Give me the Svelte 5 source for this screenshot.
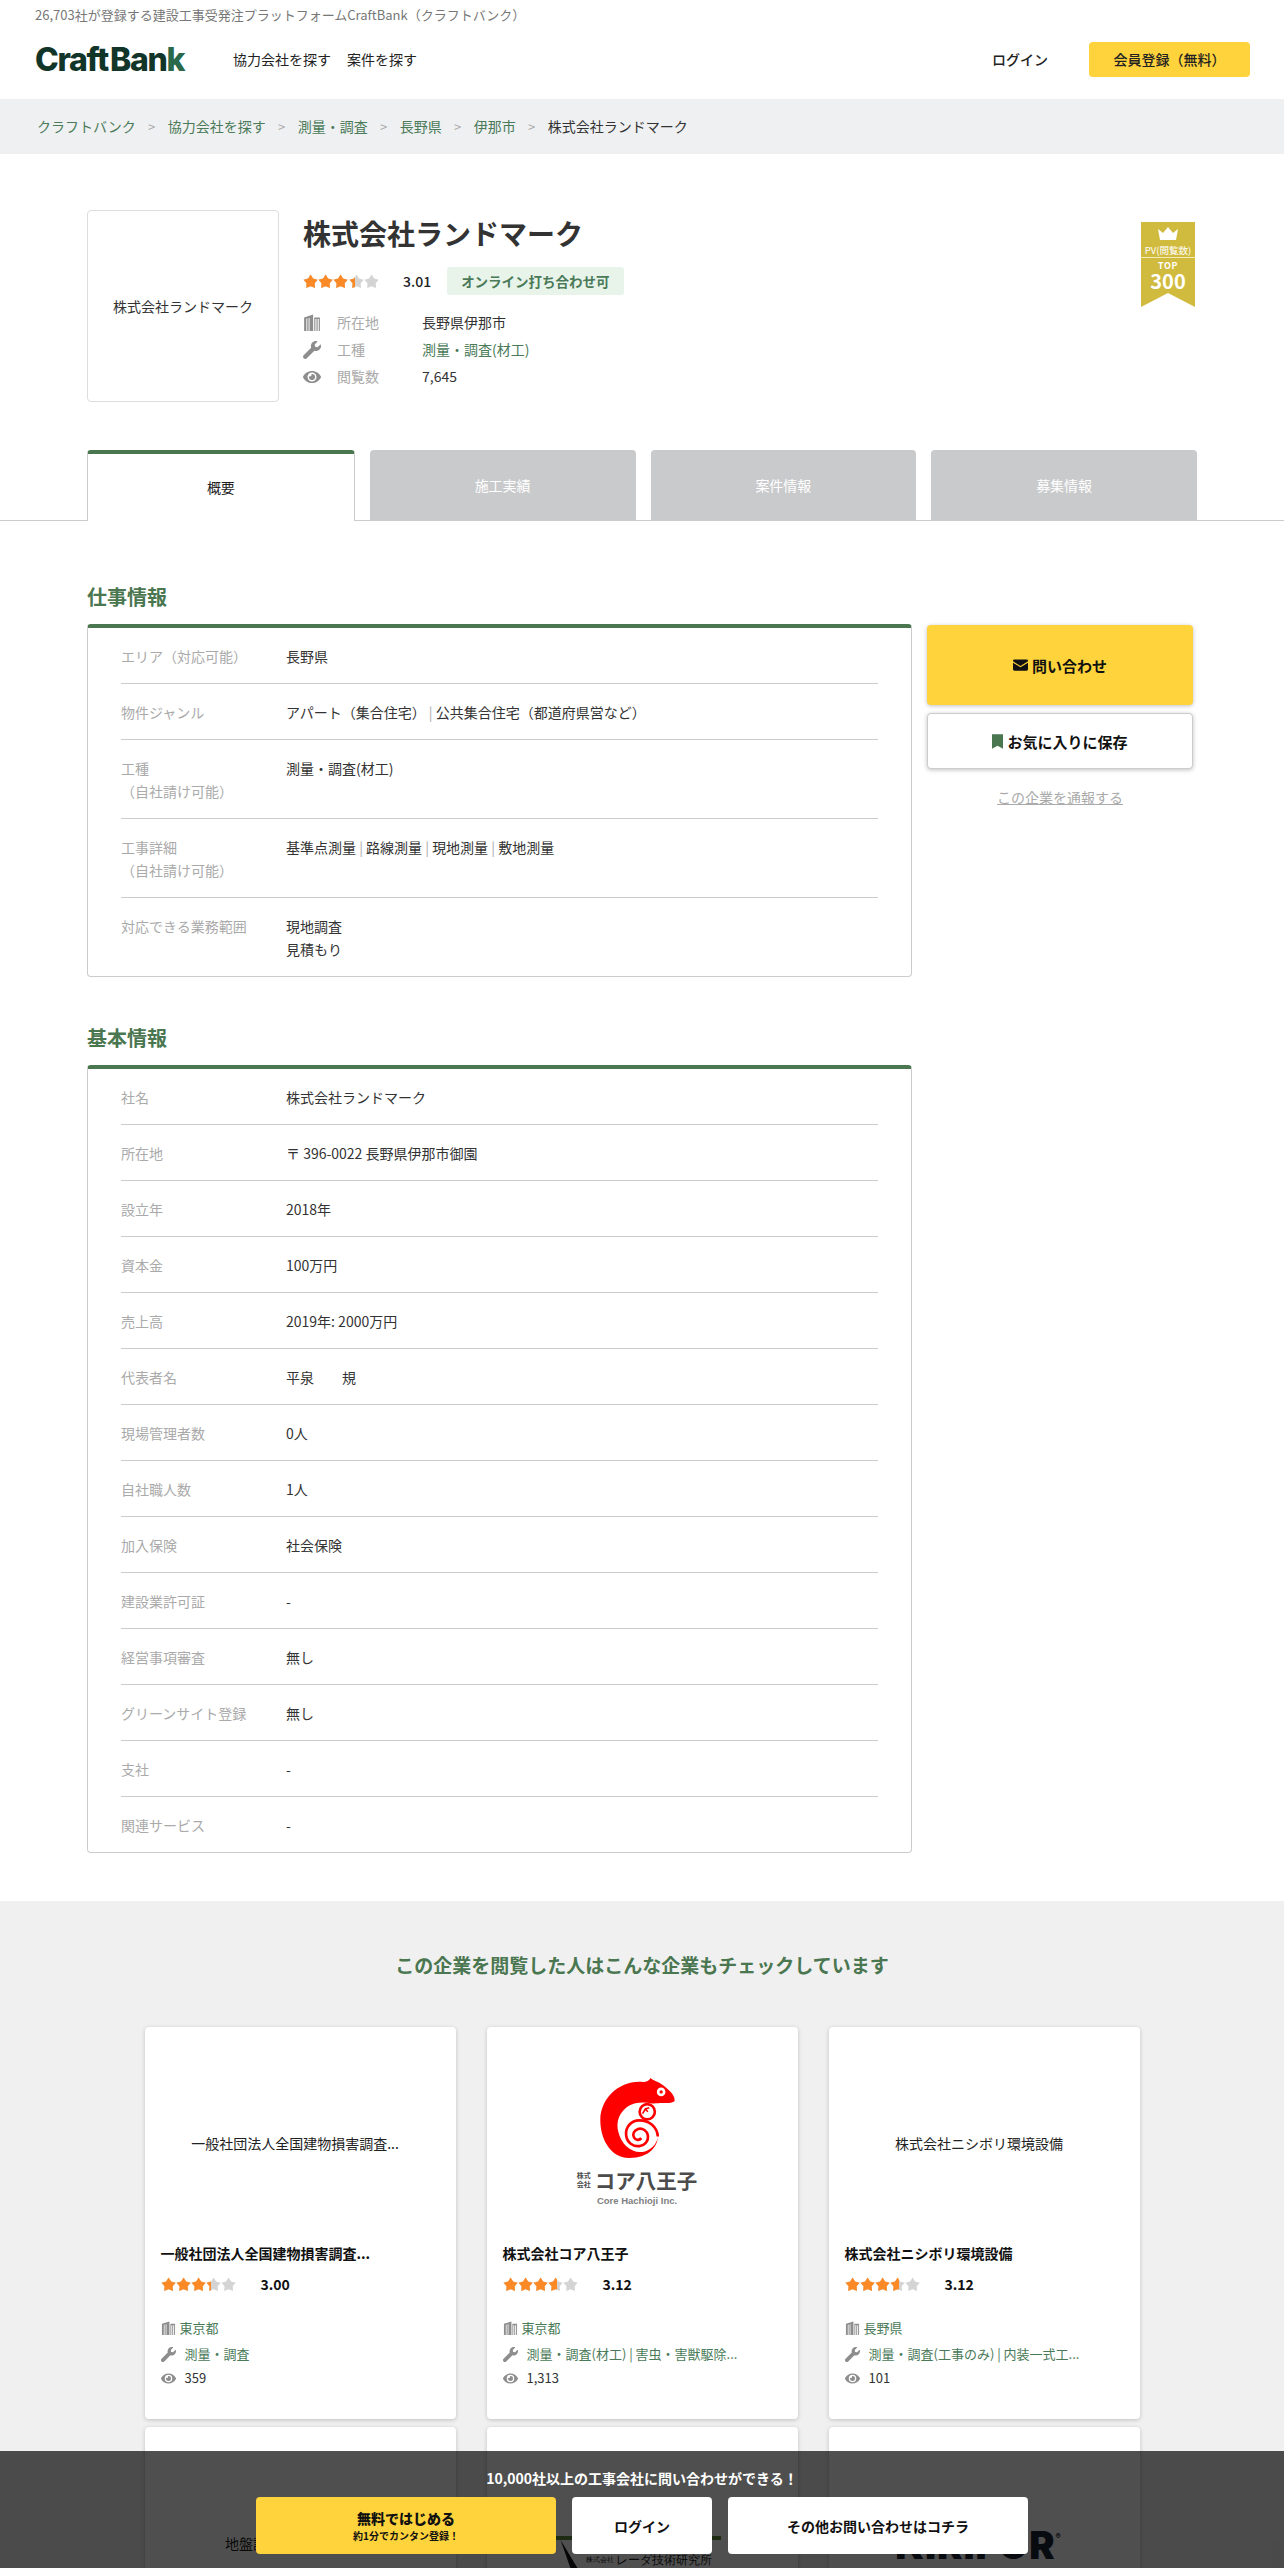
<script lang="ts">
	const jobRows = [
		{ label: 'エリア（対応可能）', lines: ['長野県'] },
		{ label: '物件ジャンル', lines: ['アパート（集合住宅） | 公共集合住宅（都道府県営など）'] },
		{ label: '工種\n（自社請け可能）', lines: ['測量・調査(材工)'] },
		{ label: '工事詳細\n（自社請け可能）', lines: ['基準点測量 | 路線測量 | 現地測量 | 敷地測量'] },
		{ label: '対応できる業務範囲', lines: ['現地調査', '見積もり'] }
	];

	const basicRows = [
		['社名', '株式会社ランドマーク'],
		['所在地', '〒 396-0022 長野県伊那市御園'],
		['設立年', '2018年'],
		['資本金', '100万円'],
		['売上高', '2019年: 2000万円'],
		['代表者名', '平泉　　規'],
		['現場管理者数', '0人'],
		['自社職人数', '1人'],
		['加入保険', '社会保険'],
		['建設業許可証', '-'],
		['経営事項審査', '無し'],
		['グリーンサイト登録', '無し'],
		['支社', '-'],
		['関連サービス', '-']
	];

	const cards = [
		{ logo: '一般社団法人全国建物損害調査...', title: '一般社団法人全国建物損害調査...', score: '3.00', fill: 67, pref: '東京都', trade: '測量・調査', views: '359' },
		{ logo: '', title: '株式会社コア八王子', score: '3.12', fill: 72, pref: '東京都', trade: '測量・調査(材工) | 害虫・害獣駆除...', views: '1,313' },
		{ logo: '株式会社ニシボリ環境設備', title: '株式会社ニシボリ環境設備', score: '3.12', fill: 72, pref: '長野県', trade: '測量・調査(工事のみ) | 内装一式工...', views: '101' }
	];

	const star = 'M8 .5L10.700 4.780 15.600 6.030 12.370 9.920 12.700 14.970 8 13.100 3.300 14.970 3.630 9.920 .4 6.030 5.300 4.780z';
</script>

{#snippet stars(fill)}
	<span class="stars">
		<span class="stars-row grey">
			{#each [0, 1, 2, 3, 4] as i}
				<svg viewBox="0 0 16 16"><path d={star} /></svg>
			{/each}
		</span>
		<span class="stars-row orange" style={`width:${fill}%`}>
			{#each [0, 1, 2, 3, 4] as i}
				<svg viewBox="0 0 16 16"><path d={star} /></svg>
			{/each}
		</span>
	</span>
{/snippet}

{#snippet buildingIcon()}
	<svg class="icon" viewBox="0 0 16 16"><path d="M1 15V3l8-2.500V15zM10 3h5v12h-1V4.500h-1V15h-1V4.500h-1V15h-1z" /><path d="M3 4v11h.8V4zM5 3.500V15h.8V3.500z" fill="#fff" /></svg>
{/snippet}

{#snippet wrenchIcon()}
	<svg class="icon" viewBox="0 0 512 512"><path d="M507.700 109.100c-2.200-9-13.500-12.100-20.100-5.500l-74.400 74.400-67.900-11.300-11.300-67.900 74.400-74.400c6.600-6.600 3.400-17.900-5.700-20.200-47.400-11.700-99.500.9-136.600 38-39.700 39.700-50.800 97.100-34.900 147.200L18.700 402.800c-25 25-25 65.500 0 90.500s65.500 25 90.500 0l213.200-213.200c50.100 15.900 107.500 4.800 147.300-34.900 37.100-37.100 49.700-89.300 38-136.100z" /></svg>
{/snippet}

{#snippet eyeIcon()}
	<svg class="icon" viewBox="0 0 576 512"><path d="M572.500 241.400C518.300 135.600 410.900 64 288 64S57.700 135.600 3.500 241.400a32.400 32.400 0 0 0 0 29.200C57.700 376.400 165.100 448 288 448s230.300-71.600 284.500-177.400a32.400 32.400 0 0 0 0-29.200zM288 400a144 144 0 1 1 144-144 143.900 143.900 0 0 1-144 144zm0-240a95.300 95.300 0 0 0-25.300 3.800 47.900 47.900 0 0 1-66.900 66.900A95.800 95.800 0 1 0 288 160z" /></svg>
{/snippet}

<div class="page">
	<header class="site-header">
		<p class="tagline">26,703社が登録する建設工事受発注プラットフォームCraftBank（クラフトバンク）</p>
		<div class="header-row">
			<div class="logo">Craft<span class="gap"></span>Ban<span class="logo-k">k</span></div>
			<nav class="main-nav">
				<span>協力会社を探す</span>
				<span>案件を探す</span>
			</nav>
			<span class="login">ログイン</span>
			<span class="register">会員登録（無料）</span>
		</div>
	</header>

	<div class="breadcrumb">
		<span class="crumb">クラフトバンク</span><span class="sep">&gt;</span>
		<span class="crumb">協力会社を探す</span><span class="sep">&gt;</span>
		<span class="crumb">測量・調査</span><span class="sep">&gt;</span>
		<span class="crumb">長野県</span><span class="sep">&gt;</span>
		<span class="crumb">伊那市</span><span class="sep">&gt;</span>
		<span>株式会社ランドマーク</span>
	</div>

	<section class="hero">
		<div class="hero-logo">株式会社ランドマーク</div>
		<div class="hero-body">
			<h1>株式会社ランドマーク</h1>
			<div class="rating-line">
				{@render stars(69)}
				<b class="score">3.01</b>
				<span class="online">オンライン打ち合わせ可</span>
			</div>
			<dl class="facts">
				<div>{@render buildingIcon()}<dt>所在地</dt><dd>長野県伊那市</dd></div>
				<div>{@render wrenchIcon()}<dt>工種</dt><dd class="green">測量・調査(材工)</dd></div>
				<div>{@render eyeIcon()}<dt>閲覧数</dt><dd>7,645</dd></div>
			</dl>
		</div>
		<div class="medal">
			<svg viewBox="0 0 54 85"><path d="M0 0h54v85L27 71 0 85z" fill="#d1bb3e" /><path d="M17 7l5 4 5-6 5 6 5-4-2 11H19z" fill="#fff" /><path d="M0 35h54v1H0z" fill="#f3ecb8" /></svg>
			<span class="medal-pv">PV(閲覧数)</span>
			<span class="medal-top">TOP</span>
			<span class="medal-num">300</span>
		</div>
	</section>

	<div class="tabs">
		<span class="tab active">概要</span>
		<span class="tab">施工実績</span>
		<span class="tab">案件情報</span>
		<span class="tab">募集情報</span>
	</div>

	<main class="content">
		<div class="left">
			<h2>仕事情報</h2>
			<div class="panel">
				{#each jobRows as row}
					<div class="row">
						<div class="row-label">{row.label}</div>
						<div class="row-value">
							{#each row.lines as line}
								<div>
									{#each line.split(' | ') as part, i}
										{#if i}<span class="bar">{' | '}</span>{/if}{part}
									{/each}
								</div>
							{/each}
						</div>
					</div>
				{/each}
			</div>

			<h2 class="second">基本情報</h2>
			<div class="panel">
				{#each basicRows as [label, value]}
					<div class="row">
						<div class="row-label">{label}</div>
						<div class="row-value">{value}</div>
					</div>
				{/each}
			</div>
		</div>

		<aside class="side">
			<button class="ask">
				<svg viewBox="0 0 16 12"><path d="M0 1.500A1.500 1.500 0 0 1 1.500 0h13A1.500 1.500 0 0 1 16 1.500v.5L8 7 0 2zM0 3.500V10.500A1.500 1.500 0 0 0 1.500 12h13a1.500 1.500 0 0 0 1.500-1.500V3.500L8 8.500z" /></svg>
				問い合わせ
			</button>
			<button class="save">
				<svg viewBox="0 0 12 16"><path d="M0 0h12v16L6 12.500 0 16z" /></svg>
				お気に入りに保存
			</button>
			<span class="report">この企業を通報する</span>
		</aside>
	</main>

	<section class="related">
		<h2>この企業を閲覧した人はこんな企業もチェックしています</h2>
		<div class="card-grid">
			{#each cards as card}
				<article class="card">
					<div class="card-logo">
						{#if card.logo}
							{card.logo}
						{:else}
							<div class="core">
								<svg viewBox="0 0 225 242">
									<path d="M152 0C160 8 175 10 190 22 205 34 225 50 225 67 225 75 205 76 190 76 175 76 165 78 157 77 135 72 105 72 85 85 60 102 45 130 55 165 65 205 100 232 135 222 160 214 172 195 174 177 174 205 150 242 87 242 35 242 0 190 0 127 0 60 60 5 130 12 140 12 148 8 152 0Z" fill="#f00" />
									<path d="M174 177C172 148 148 128 118 128 92 128 76 150 78 172 80 196 100 208 118 206 136 204 146 190 144 174 142 160 128 150 114 154 102 158 96 170 102 180 106 188 118 190 124 182" fill="none" stroke="#f00" stroke-width="8" />
									<circle cx="142" cy="102" r="23" fill="#fff" stroke="#f00" stroke-width="8" />
									<path d="M128 108l8-14 8 8M136 94l12-4" fill="none" stroke="#f00" stroke-width="5" />
									<circle cx="184" cy="42" r="13" fill="#fff" /><circle cx="184" cy="42" r="5" fill="#f00" />
								</svg>
								<div class="core-name"><span class="core-kind">株式<br />会社</span><span>コア八王子</span></div>
								<div class="core-en">Core Hachioji Inc.</div>
							</div>
						{/if}
					</div>
					<h3>{card.title}</h3>
					<div class="card-rating">
						{@render stars(card.fill)}
						<b>{card.score}</b>
					</div>
					<div class="card-fact pref">{@render buildingIcon()}<span class="green">{card.pref}</span></div>
					<div class="card-fact">{@render wrenchIcon()}<span class="green">{card.trade}</span></div>
					<div class="card-fact">{@render eyeIcon()}<span>{card.views}</span></div>
				</article>
			{/each}
			<article class="card"><div class="card-logo">地盤調査解析株式会社</div></article>
			<article class="card">
				<div class="radar">
					<div class="radar-bar"></div>
					<div class="radar-row">
						<svg viewBox="0 0 12 20"><path d="M0 0l12 20H7z" fill="#15151f" /></svg>
						<span class="radar-kind">株式会社</span>
						<span>レーダ技術研究所</span>
					</div>
				</div>
			</article>
			<article class="card"><div class="kiri">KIRIFOR<sup>®</sup></div></article>
		</div>
	</section>

	<div class="cta">
		<p>10,000社以上の工事会社に問い合わせができる！</p>
		<div class="cta-buttons">
			<button class="cta-start"><b>無料ではじめる</b><small>約1分でカンタン登録！</small></button>
			<button class="cta-login">ログイン</button>
			<button class="cta-other">その他お問い合わせはコチラ</button>
		</div>
	</div>
</div>

<style>
	:global(body) {
		margin: 0;
		background: #fff;
	}

	.page {
		position: relative;
		height: 2568px;
		overflow: hidden;
		font-family: 'Noto Sans CJK JP', 'Noto Sans', sans-serif;
		font-size: 14px;
		color: #333;
		line-height: 1.5;
	}

	p, h1, h2, h3, dl, dd {
		margin: 0;
	}

	button {
		border: 0;
		font-family: inherit;
		color: #111;
		font-weight: 700;
	}

	.icon {
		display: block;
		width: 16px;
		height: 16px;
		fill: #8d8d8d;
		flex: none;
	}

	.green {
		color: #4a7a58;
	}

	/* header */
	.site-header {
		height: 99px;
		padding: 5px 34px 0 35px;
		box-sizing: border-box;
	}

	.tagline {
		font-size: 13px;
		line-height: 20px;
		color: #777;
	}

	.header-row {
		display: flex;
		align-items: center;
		height: 35px;
		margin-top: 17px;
	}

	.logo {
		width: 198px;
		font-family: Inter, sans-serif;
		font-size: 32px;
		font-weight: 800;
		letter-spacing: -1.300px;
		color: #12352a;
		line-height: 35px;
	}

	.logo .gap {
		display: inline-block;
		width: 2px;
	}

	.logo-k {
		color: #2a6a4a;
	}

	.main-nav {
		display: flex;
		gap: 16px;
		color: #222;
	}

	.login {
		margin-left: auto;
		font-weight: 500;
		color: #222;
		margin-right: 41px;
	}

	.register {
		width: 161px;
		height: 35px;
		border-radius: 4px;
		background: #ffd33b;
		font-weight: 500;
		line-height: 35px;
		text-align: center;
		color: #222;
	}

	.breadcrumb {
		display: flex;
		align-items: center;
		height: 55px;
		padding-left: 37px;
		background: #eff0f2;
		color: #333;
	}

	.crumb {
		color: #4a7a58;
	}

	.sep {
		margin: 0 12.400px;
		color: #aaa;
		font-size: 13px;
	}

	/* hero */
	.hero {
		position: relative;
		display: flex;
		gap: 24px;
		margin: 56px 87px 0;
		height: 240px;
	}

	.hero-logo {
		display: flex;
		align-items: center;
		justify-content: center;
		width: 192px;
		height: 192px;
		box-sizing: border-box;
		border: 1px solid #ddd;
		border-radius: 4px;
	}

	h1 {
		font-size: 28px;
		font-weight: 700;
		line-height: 40px;
		margin-top: 3px;
	}

	.rating-line {
		display: flex;
		align-items: center;
		margin-top: 14px;
		height: 28px;
	}

	.stars {
		position: relative;
		display: inline-block;
		width: 76px;
		height: 15px;
		flex: none;
	}

	.stars-row {
		position: absolute;
		top: 0;
		left: 0;
		display: flex;
		width: 76px;
		height: 15px;
		overflow: hidden;
	}

	.stars-row svg {
		width: 15.200px;
		height: 15px;
		flex: none;
	}

	.grey {
		fill: #d4d4d4;
	}

	.orange {
		fill: #fb8a26;
	}

	.score {
		margin-left: 24px;
		font-weight: 500;
		color: #222;
	}

	.online {
		margin-left: 16px;
		padding: 0 14px;
		height: 28px;
		line-height: 28px;
		border-radius: 3px;
		background: #e8f3ea;
		color: #4a7a58;
		font-weight: 700;
		font-size: 13.500px;
	}

	.facts {
		margin-top: 14px;
	}

	.facts > div {
		display: flex;
		align-items: center;
		height: 27px;
	}

	.facts .icon {
		width: 18px;
		height: 18px;
	}

	.facts dt {
		width: 85px;
		margin-left: 16px;
		color: #aaa;
	}

	.medal {
		position: absolute;
		right: 0;
		top: 12px;
		width: 54px;
		height: 85px;
		margin-right: 2px;
		color: #fff;
		text-align: center;
	}

	.medal svg {
		position: absolute;
		inset: 0;
	}

	.medal span {
		position: relative;
		display: block;
		line-height: 10px;
	}

	.medal-pv {
		padding-top: 23px;
		font-size: 9.500px;
		white-space: nowrap;
		margin: 0 -2px;
	}

	.medal-top {
		padding-top: 6px;
		font-size: 9px;
		font-weight: 700;
		letter-spacing: 0.5px;
	}

	.medal .medal-num {
		font-size: 20px;
		line-height: 20px;
		font-weight: 700;
	}

	/* tabs */
	.tabs {
		display: flex;
		gap: 15px;
		padding: 0 87px;
		border-bottom: 1px solid #ccc;
		height: 70px;
	}

	.tab {
		flex: 1;
		display: flex;
		align-items: center;
		justify-content: center;
		height: 70px;
		background: #c9cacc;
		border-radius: 4px 4px 0 0;
		color: #fff;
	}

	.tab.active {
		box-sizing: border-box;
		height: 71px;
		background: #fff;
		color: #222;
		border: 1px solid #ccc;
		border-top: 4px solid #4a7650;
		border-bottom: 0;
	}

	/* main */
	.content {
		display: flex;
		gap: 15px;
		padding: 60px 91px 0 87px;
	}

	.left {
		width: 825px;
		flex: none;
	}

	h2 {
		font-size: 20px;
		font-weight: 700;
		line-height: 32px;
		color: #4a7650;
		margin-bottom: 11px;
	}

	h2.second {
		margin-top: 45px;
	}

	.panel {
		padding: 0 33px;
		border: 1px solid #ccc;
		border-top: 4px solid #4a7650;
		border-radius: 4px;
	}

	.row {
		display: flex;
		padding: 17px 0 15px;
		border-bottom: 1px solid #ccc;
		line-height: 23px;
	}

	.row:last-child {
		border-bottom: 0;
	}

	.row-label {
		width: 165px;
		flex: none;
		color: #aaa;
		white-space: pre-line;
	}

	.bar {
		color: #aaa;
		white-space: pre;
	}

	.side {
		display: flex;
		flex: 1;
		flex-direction: column;
		align-items: center;
		margin-top: 44px;
	}

	.ask, .save {
		display: flex;
		align-items: center;
		justify-content: center;
		gap: 4px;
		width: 100%;
		border-radius: 4px;
		font-size: 15px;
		box-shadow: 0 1px 4px rgba(0, 0, 0, 0.25);
	}

	.ask {
		height: 80px;
		background: #ffd33b;
	}

	.ask svg {
		width: 15px;
		height: 12px;
		fill: #111;
	}

	.save {
		height: 56px;
		margin-top: 8px;
		background: #fff;
		border: 1px solid #ccc;
	}

	.save svg {
		width: 11px;
		height: 15px;
		fill: #4a7650;
	}

	.report {
		margin-top: 18px;
		color: #aaa;
		text-decoration: underline;
	}

	/* related */
	.related {
		margin-top: 48px;
		padding-top: 48px;
		height: 700px;
		background: #f0f0f0;
	}

	.related h2 {
		font-size: 19px;
		text-align: center;
		margin-bottom: 46px;
	}

	.card-grid {
		display: grid;
		grid-template-columns: repeat(3, 311px);
		gap: 8px 31px;
		justify-content: center;
	}

	.card {
		height: 392px;
		padding: 0 16px;
		box-sizing: border-box;
		background: #fff;
		border-radius: 4px;
		box-shadow: 0 1px 4px rgba(0, 0, 0, 0.2);
	}

	.card-logo {
		display: flex;
		align-items: center;
		justify-content: center;
		box-sizing: border-box;
		height: 215px;
		padding: 17px 10px 0 0;
		color: #222;
	}

	.core {
		display: flex;
		flex-direction: column;
		align-items: center;
	}

	.core svg {
		width: 75px;
		height: 80px;
		margin-bottom: 10px;
	}

	.core-name {
		display: flex;
		align-items: center;
		gap: 4px;
		font-size: 20.500px;
		font-weight: 700;
		line-height: 24px;
		color: #4c4c4c;
	}

	.core-kind {
		font-size: 7px;
		line-height: 9px;
	}

	.core-en {
		margin-top: 2px;
		font-family: 'Liberation Sans', sans-serif;
		font-size: 9.500px;
		font-weight: 700;
		line-height: 14px;
		color: #808080;
	}

	h3 {
		font-size: 14px;
		font-weight: 700;
		line-height: 22px;
		color: #111;
	}

	.card-rating {
		display: flex;
		align-items: center;
		gap: 24px;
		margin-top: 10px;
		color: #111;
	}

	.card-rating b {
		font-weight: 700;
	}

	.card-fact {
		display: flex;
		align-items: center;
		gap: 9px;
		height: 24px;
		font-size: 13px;
	}

	.card-fact .icon {
		width: 15px;
		height: 15px;
	}

	.card-fact.pref {
		margin-top: 19px;
		gap: 4px;
		height: 28px;
	}

	.radar {
		padding: 109px 0 0 53px;
	}

	.radar-bar {
		width: 165px;
		height: 4px;
		background: #5f8a3a;
	}

	.radar-row {
		display: flex;
		align-items: flex-end;
		gap: 2px;
		height: 28px;
		margin-left: 4px;
		font-family: 'Liberation Serif', serif;
		font-size: 12px;
		line-height: 16px;
		color: #222;
	}

	.radar-row svg {
		width: 18px;
		height: 28px;
		margin-right: 6px;
	}

	.radar-kind {
		font-size: 7px;
	}

	.kiri {
		padding: 93px 12px 0 0;
		text-align: center;
		font-family: Inter, sans-serif;
		font-weight: 900;
		font-size: 38px;
		letter-spacing: 1px;
		line-height: 50px;
		color: #1b2436;
		white-space: nowrap;
	}

	.kiri sup {
		font-size: 8px;
		letter-spacing: 0;
		vertical-align: 20px;
		line-height: 0;
	}

	/* bottom bar */
	.cta {
		position: absolute;
		left: 0;
		right: 0;
		bottom: 0;
		height: 117px;
		background: rgba(0, 0, 0, 0.69);
	}

	.cta p {
		padding-top: 15px;
		line-height: 24px;
		text-align: center;
		color: #fff;
		font-size: 14px;
		font-weight: 700;
	}

	.cta-buttons {
		display: flex;
		justify-content: center;
		gap: 16px;
		margin-top: 7px;
	}

	.cta-buttons button {
		height: 57px;
		border-radius: 4px;
		background: #fff;
		font-size: 14px;
	}

	.cta-start {
		display: flex;
		flex-direction: column;
		align-items: center;
		justify-content: center;
		width: 300px;
		background: #ffd33b !important;
	}

	.cta-start small {
		font-size: 10px;
	}

	.cta-login {
		width: 140px;
	}

	.cta-other {
		width: 300px;
	}
</style>
